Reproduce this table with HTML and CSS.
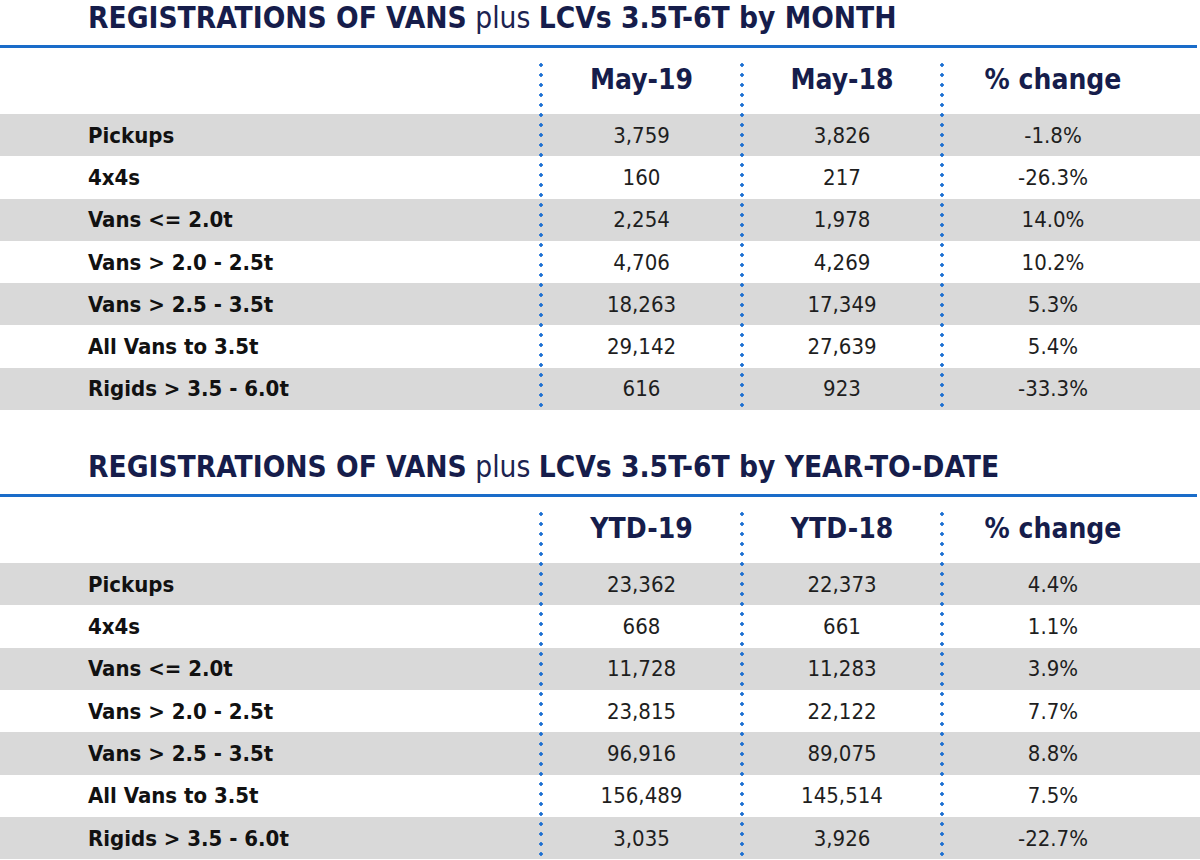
FILE: index.html
```html
<!DOCTYPE html>
<html>
<head>
<meta charset="utf-8">
<link rel="stylesheet" href="styles.css">
</head>
<body>
<section class="block">
  <h2 class="title"><b>REGISTRATIONS OF VANS</b> <span class="light">plus</span> <b>LCVs 3.5T-6T by MONTH</b></h2>
  <div class="rule"></div>
  <div class="table">
    <div class="row head"><div></div><div class="c">May-19</div><div class="c">May-18</div><div class="c">% change</div><div></div></div>
    <div class="row gray"><div class="lab">Pickups</div><div class="c">3,759</div><div class="c">3,826</div><div class="c">-1.8%</div><div></div></div>
    <div class="row"><div class="lab">4x4s</div><div class="c">160</div><div class="c">217</div><div class="c">-26.3%</div><div></div></div>
    <div class="row gray"><div class="lab">Vans &lt;= 2.0t</div><div class="c">2,254</div><div class="c">1,978</div><div class="c">14.0%</div><div></div></div>
    <div class="row"><div class="lab">Vans &gt; 2.0 - 2.5t</div><div class="c">4,706</div><div class="c">4,269</div><div class="c">10.2%</div><div></div></div>
    <div class="row gray"><div class="lab">Vans &gt; 2.5 - 3.5t</div><div class="c">18,263</div><div class="c">17,349</div><div class="c">5.3%</div><div></div></div>
    <div class="row"><div class="lab">All Vans to 3.5t</div><div class="c">29,142</div><div class="c">27,639</div><div class="c">5.4%</div><div></div></div>
    <div class="row gray"><div class="lab">Rigids &gt; 3.5 - 6.0t</div><div class="c">616</div><div class="c">923</div><div class="c">-33.3%</div><div></div></div>
    <div class="dots d1"></div><div class="dots d2"></div><div class="dots d3"></div>
  </div>
</section>
<section class="block second">
  <h2 class="title"><b>REGISTRATIONS OF VANS</b> <span class="light">plus</span> <b>LCVs 3.5T-6T by YEAR-TO-DATE</b></h2>
  <div class="rule"></div>
  <div class="table">
    <div class="row head"><div></div><div class="c">YTD-19</div><div class="c">YTD-18</div><div class="c">% change</div><div></div></div>
    <div class="row gray"><div class="lab">Pickups</div><div class="c">23,362</div><div class="c">22,373</div><div class="c">4.4%</div><div></div></div>
    <div class="row"><div class="lab">4x4s</div><div class="c">668</div><div class="c">661</div><div class="c">1.1%</div><div></div></div>
    <div class="row gray"><div class="lab">Vans &lt;= 2.0t</div><div class="c">11,728</div><div class="c">11,283</div><div class="c">3.9%</div><div></div></div>
    <div class="row"><div class="lab">Vans &gt; 2.0 - 2.5t</div><div class="c">23,815</div><div class="c">22,122</div><div class="c">7.7%</div><div></div></div>
    <div class="row gray"><div class="lab">Vans &gt; 2.5 - 3.5t</div><div class="c">96,916</div><div class="c">89,075</div><div class="c">8.8%</div><div></div></div>
    <div class="row"><div class="lab">All Vans to 3.5t</div><div class="c">156,489</div><div class="c">145,514</div><div class="c">7.5%</div><div></div></div>
    <div class="row gray"><div class="lab">Rigids &gt; 3.5 - 6.0t</div><div class="c">3,035</div><div class="c">3,926</div><div class="c">-22.7%</div><div></div></div>
    <div class="dots d1"></div><div class="dots d2"></div><div class="dots d3"></div>
  </div>
</section>
</body>
</html>
```

FILE: styles.css
```css
* { box-sizing: border-box; }
html, body { margin: 0; padding: 0; background: #fff; }
body {
  width: 1200px;
  height: 860px;
  overflow: hidden;
  font-family: "DejaVu Sans Condensed", "DejaVu Sans", sans-serif;
  font-stretch: condensed;
}
.block.second { margin-top: 39px; }
.title {
  margin: 0;
  height: 45px;
  padding: 0 0 9px 88px;
  font-size: 29.6px;
  line-height: 36px;
  color: #161d4b;
  font-weight: 400;
  white-space: nowrap;
}
.title b { font-weight: 700; }
.title .light { font-weight: 400; color: #1c2350; }
.rule {
  width: 1197px;
  height: 3px;
  background: #1a6cc9;
}
.table {
  display: grid;
  grid-template-columns: 541px 201px 200px 222px 1fr;
  grid-template-rows: 66px repeat(7, 42.3px);
}
.row {
  grid-column: 1 / -1;
  display: grid;
  grid-template-columns: 541px 201px 200px 222px 1fr;
  align-items: center;
  font-size: 22px;
  color: #1e1e1e;
}
.row:nth-child(1) { grid-row: 1; }
.row:nth-child(2) { grid-row: 2; }
.row:nth-child(3) { grid-row: 3; }
.row:nth-child(4) { grid-row: 4; }
.row:nth-child(5) { grid-row: 5; }
.row:nth-child(6) { grid-row: 6; }
.row:nth-child(7) { grid-row: 7; }
.row:nth-child(8) { grid-row: 8; }
.row.gray { background: #d9d9d9; }
.row.head {
  font-size: 28px;
  font-weight: 700;
  color: #161d4b;
}
.row.head .c { padding-bottom: 4px; }
.lab {
  padding-left: 88px;
  font-weight: 700;
  color: #111;
}
.c { text-align: center; }
.dots {
  grid-row: 1 / -1;
  justify-self: start;
  width: 4px;
  margin-left: -2px;
  margin-top: 12px;
  background-image: radial-gradient(circle at 2px 5px, #1b6fd2 1.5px, transparent 2px);
  background-size: 4px 10px;
  background-repeat: repeat-y;
}
.d1 { grid-column: 2; }
.d2 { grid-column: 3; }
.d3 { grid-column: 4; }
```
